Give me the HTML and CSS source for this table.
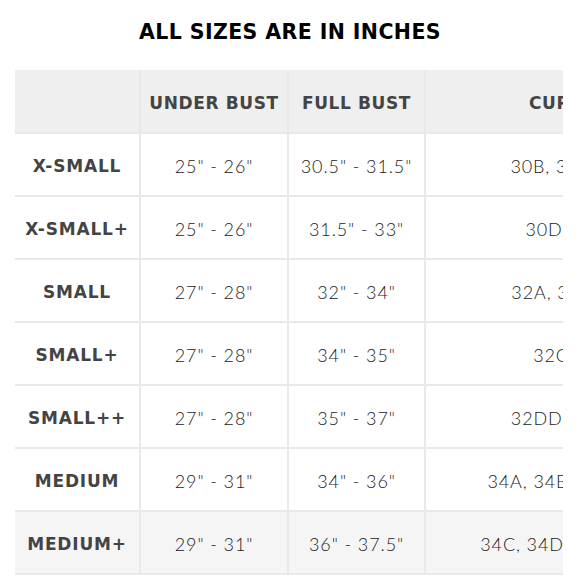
FILE: index.html
```html
<!DOCTYPE html>
<html>
<head>
<meta charset="utf-8">
<link rel="stylesheet" href="styles.css">
</head>
<body>
<h1 class="title">ALL SIZES ARE IN INCHES</h1>
<div class="wrap">
<table class="sizes">
<colgroup><col class="c1"><col class="c2"><col class="c3"><col class="c4"></colgroup>
<thead>
<tr><th></th><th>UNDER BUST</th><th>FULL BUST</th><th>CUP SIZE</th></tr>
</thead>
<tbody>
<tr><th>X-SMALL</th><td>25" - 26"</td><td>30.5" - 31.5"</td><td>30B, 30C, 30D</td></tr>
<tr><th>X-SMALL+</th><td>25" - 26"</td><td>31.5" - 33"</td><td>30D, 30DD</td></tr>
<tr><th>SMALL</th><td>27" - 28"</td><td>32" - 34"</td><td>32A, 32B, 32C</td></tr>
<tr><th>SMALL+</th><td>27" - 28"</td><td>34" - 35"</td><td>32C, 32D</td></tr>
<tr><th>SMALL++</th><td>27" - 28"</td><td>35" - 37"</td><td>32DD, 32DDD</td></tr>
<tr><th>MEDIUM</th><td>29" - 31"</td><td>34" - 36"</td><td>34A, 34B, 34C, 34D</td></tr>
<tr class="hl"><th>MEDIUM+</th><td>29" - 31"</td><td>36" - 37.5"</td><td>34C, 34D, 34DD, 34E</td></tr>
</tbody>
</table>
</div>
</body>
</html>
```
FILE: styles.css
```css
html, body {
  margin: 0;
  padding: 0;
  background: #fff;
}
.title {
  margin: 0;
  padding-top: 18px;
  height: 52px;
  box-sizing: border-box;
  text-align: center;
  font-family: "DejaVu Sans", sans-serif;
  font-weight: bold;
  font-size: 20.5px;
  letter-spacing: 0.4px;
  color: #000;
  line-height: 28px;
}
.wrap {
  margin-top: 18px;
  margin-left: 15px;
  width: 548px;
  overflow: hidden;
}
.sizes {
  border-collapse: collapse;
  table-layout: fixed;
  width: 710px;
}
.c1 { width: 125px; }
.c2 { width: 148px; }
.c3 { width: 137px; }
.c4 { width: 300px; }
.sizes th, .sizes td {
  height: 63px;
  padding: 3px 0 0;
  box-sizing: border-box;
  border: 2px solid #e9e9e9;
  text-align: center;
  vertical-align: middle;
}
.sizes tr > :first-child { border-left: none; }
.sizes thead th {
  border-top: none;
  background: #efefef;
  font-family: "DejaVu Sans", sans-serif;
  font-weight: bold;
  font-size: 17px;
  color: #444;
  letter-spacing: 0.6px;
}
.sizes tbody th {
  font-family: "DejaVu Sans", sans-serif;
  font-weight: bold;
  font-size: 17px;
  color: #444;
  letter-spacing: 0.8px;
}
.sizes td {
  font-family: "Lato", sans-serif;
  font-weight: 300;
  font-size: 18px;
  color: #222;
  letter-spacing: 0.9px;
}
.sizes .hl th, .sizes .hl td {
  background: #f5f5f5;
}
```
